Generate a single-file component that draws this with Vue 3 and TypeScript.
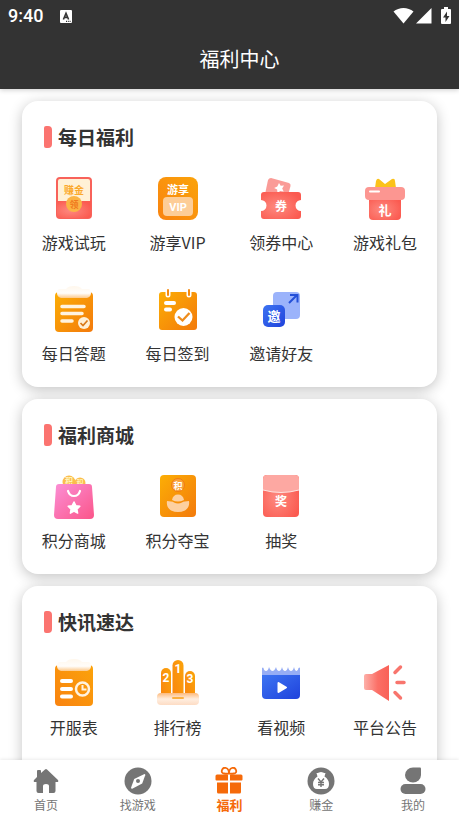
<script setup lang="ts">
interface Entry {
  id: string
  label: string
}
interface Section {
  title: string
  items: Entry[]
}

const sections: Section[] = [
  {
    title: '每日福利',
    items: [
      { id: 'trial', label: '游戏试玩' },
      { id: 'vip', label: '游享VIP' },
      { id: 'coupon', label: '领券中心' },
      { id: 'gift', label: '游戏礼包' },
      { id: 'quiz', label: '每日答题' },
      { id: 'checkin', label: '每日签到' },
      { id: 'invite', label: '邀请好友' },
    ],
  },
  {
    title: '福利商城',
    items: [
      { id: 'mall', label: '积分商城' },
      { id: 'treasure', label: '积分夺宝' },
      { id: 'lottery', label: '抽奖' },
    ],
  },
  {
    title: '快讯速达',
    items: [
      { id: 'servers', label: '开服表' },
      { id: 'ranking', label: '排行榜' },
      { id: 'video', label: '看视频' },
      { id: 'notice', label: '平台公告' },
    ],
  },
]

const tabs: Entry[] = [
  { id: 'home', label: '首页' },
  { id: 'discover', label: '找游戏' },
  { id: 'welfare', label: '福利' },
  { id: 'earn', label: '赚金' },
  { id: 'mine', label: '我的' },
]
const activeTab = 'welfare'
</script>

<template>
  <div class="app">
    <svg class="defs" aria-hidden="true">
      <defs>
        <linearGradient id="gOrange" x1="1" y1="0" x2="0" y2="1">
          <stop offset="0" stop-color="#fba30a" />
          <stop offset="1" stop-color="#f98310" />
        </linearGradient>
        <linearGradient id="gAmber" x1="0" y1="0" x2="1" y2="1">
          <stop offset="0" stop-color="#fcae05" />
          <stop offset="1" stop-color="#f37a0c" />
        </linearGradient>
        <radialGradient id="gRed" cx="0.4" cy="0.55" r="0.65">
          <stop offset="0" stop-color="#fd8a80" />
          <stop offset="1" stop-color="#fb5a50" />
        </radialGradient>
        <linearGradient id="gPink" x1="0" y1="0" x2="1" y2="1">
          <stop offset="0" stop-color="#fb8fd6" />
          <stop offset="1" stop-color="#fb5589" />
        </linearGradient>
        <linearGradient id="gBlue" x1="0" y1="0" x2="1" y2="1">
          <stop offset="0" stop-color="#3d74f2" />
          <stop offset="1" stop-color="#1f42dc" />
        </linearGradient>
        <linearGradient id="gHorn" x1="0" y1="0" x2="1" y2="0">
          <stop offset="0" stop-color="#fdb0a9" />
          <stop offset="0.55" stop-color="#fb6f66" />
          <stop offset="1" stop-color="#f96157" />
        </linearGradient>
        <linearGradient id="gClip" x1="0" y1="0" x2="0" y2="1">
          <stop offset="0" stop-color="#fff7ec" />
          <stop offset="0.6" stop-color="#fffdfa" />
          <stop offset="1" stop-color="#fdc98a" />
        </linearGradient>
        <linearGradient id="gBase" x1="0" y1="0" x2="0" y2="1">
          <stop offset="0" stop-color="#fdba7c" />
          <stop offset="0.5" stop-color="#ffeee0" />
          <stop offset="1" stop-color="#fddcc4" />
        </linearGradient>
      </defs>
    </svg>

    <header class="top">
      <div class="status">
        <span class="time">9:40</span>
        <svg class="badge" viewBox="0 0 12 13" aria-hidden="true">
          <path fill="#fff" d="M1 0h10a1 1 0 0 1 1 1v11a1 1 0 0 1-1 1H1a1 1 0 0 1-1-1V1a1 1 0 0 1 1-1z" />
          <path fill="none" stroke="#333" stroke-width="1.6" d="M3.400 9.500L6 3.300L8.600 9.500M4.500 7.400h3" />
          <path stroke="#333" stroke-width="1.200" stroke-dasharray="1.200 1" d="M6 11.300h5" />
        </svg>
        <svg class="signals" viewBox="0 0 58 18" aria-hidden="true">
          <path fill="#fff" d="M0.500 4.500C6 -0.300 15 -0.300 20.500 4.500L10.500 16.500z" />
          <path fill="#fff" d="M38.500 1v15.500H23z" />
          <path fill="#fff" d="M51 0h4v2h2q1 0 1 1v13q0 1-1 1h-8q-1 0-1-1V3q0-1 1-1h2z" />
          <path fill="#333" d="M54 4.500l-4 6h2.500v4.500l4-6H54z" />
        </svg>
      </div>
      <h1>福利中心</h1>
    </header>

    <main class="content">
      <section v-for="section in sections" :key="section.title" class="card">
        <h2>{{ section.title }}</h2>
        <div class="grid">
          <a v-for="item in section.items" :key="item.id" class="entry" :href="'#' + item.id">
            <svg class="icon" viewBox="0 0 44 44" aria-hidden="true">
              <g v-if="item.id === 'trial'">
                <rect x="4" y="0" width="36" height="42" rx="4" fill="#f8625a" />
                <rect x="6" y="2" width="32" height="30" rx="2" fill="#fff1d6" />
                <path fill="url(#gRed)" d="M5 24h9c2 0 2 7 8 7s6-7 8-7h9v14q0 3-3 3H8q-3 0-3-3z" />
                <circle cx="22" cy="27" r="8" fill="#fbb445" />
                <text x="22" y="17" font-size="10" fill="#fba92c">赚金</text>
                <text x="22" y="31" font-size="9" fill="#f07a20">领</text>
              </g>
              <g v-else-if="item.id === 'vip'">
                <rect x="2" y="0" width="40" height="43" rx="8" fill="url(#gOrange)" />
                <rect x="7" y="20" width="30" height="19" rx="4" fill="#fdcd97" />
                <text x="22" y="17" font-size="11" fill="#fff">游享</text>
                <text x="22" y="34" class="latin" font-size="11" fill="#fff">VIP</text>
              </g>
              <g v-else-if="item.id === 'coupon'">
                <path fill="#fa9b97" d="M12 1l18 5q2 1 1.500 3l-3.500 13H5L9 3q1-2 3-2z" />
                <path fill="#fff" d="M20 6l1.700 2.800 3.300-.2-1.800 2.900 1.500 3-3.500-.6-2.700 2.200-.4-3.600-3-1.600 3.200-1.500z" />
                <path fill="url(#gRed)" d="M5 15h34q3 0 3 3v5a5.500 5.500 0 0 0 0 11v5q0 3-3 3H5q-3 0-3-3v-5a5.500 5.500 0 0 0 0-11v-5q0-3 3-3z" />
                <text x="22" y="34" font-size="12" fill="#fff">券</text>
              </g>
              <g v-else-if="item.id === 'gift'">
                <path fill="#fbc21a" d="M12 11l1-7q1-3 3-2l6 5 7-5q3-1 3 2l1 7z" />
                <path fill="url(#gRed)" d="M6 20h32v19q0 4-4 4H10q-4 0-4-4z" />
                <rect x="2" y="10" width="40" height="13" rx="4" fill="#fc9691" />
                <path stroke="#fff" stroke-width="2" stroke-linecap="round" d="M7 14.500h9" />
                <text x="22" y="38" font-size="13" fill="#fff">礼</text>
              </g>
              <g v-else-if="item.id === 'quiz'">
                <rect x="3" y="4" width="38" height="40" rx="4" fill="url(#gAmber)" />
                <path fill="url(#gClip)" d="M8 1h6q2-3 8-3t8 3h6q3 0 3 4t-4 5H9q-4-1-4-5t3-4z" />
                <path stroke="#fff3df" stroke-width="3.500" stroke-linecap="round" d="M10 18.500h22M10 25.500h20M10 33h10" />
                <circle cx="32" cy="35" r="6" fill="#fff0d8" />
                <path fill="none" stroke="#d9791a" stroke-width="1.700" d="M28.500 35l2.500 2.500 4.500-5" />
              </g>
              <g v-else-if="item.id === 'checkin'">
                <rect x="3" y="4" width="38" height="38" rx="3" fill="url(#gAmber)" />
                <path stroke="#fff" stroke-width="5" stroke-linecap="round" d="M12 3v4M33 3v4" />
                <path stroke="#f58a10" stroke-width="2" stroke-linecap="round" d="M12 2v5M33 2v5" />
                <path stroke="#fff" stroke-width="4" stroke-linecap="round" d="M10 15h8M10 21.500h4" />
                <circle cx="27.500" cy="29" r="9" fill="#fff" />
                <path fill="none" stroke="#ee8c1c" stroke-width="2.300" d="M22 28.500l4.500 4 7-7.500" />
              </g>
              <g v-else-if="item.id === 'invite'">
                <rect x="14" y="4" width="27" height="27" rx="4" fill="#9bb3fb" />
                <path fill="none" stroke="#2450d8" stroke-width="2" d="M30 15l8-8M31 7h7.500v7.500" />
                <rect x="4" y="17" width="22" height="22" rx="5" fill="url(#gBlue)" />
                <text x="15" y="33" font-size="13" fill="#fff">邀</text>
              </g>
              <g v-else-if="item.id === 'mall'">
                <circle cx="17" cy="7" r="6.500" fill="#fbbd4c" />
                <circle cx="28" cy="8" r="5.500" fill="#fbbd4c" />
                <text x="17" y="9" font-size="8" fill="#fff2b8">积</text>
                <text x="28" y="10" font-size="7" fill="#fff2b8">积</text>
                <path fill="url(#gPink)" d="M7 9h30q3 0 3 3l2 28q0 4-4 4H6q-4 0-4-4l2-28q0-3 3-3z" />
                <path fill="none" stroke="#fff" stroke-width="2.200" stroke-linecap="round" d="M16 16q1.500 5 6 5t6-5" />
                <path fill="#fff" stroke="#fff" stroke-width="1.500" stroke-linejoin="round" d="M22 27l1.800 3.700 4 .6-2.900 2.800.7 4L22 36.200l-3.600 1.900.7-4-2.900-2.800 4-.6z" />
              </g>
              <g v-else-if="item.id === 'treasure'">
                <rect x="4" y="0" width="36" height="42" rx="4" fill="url(#gAmber)" />
                <circle cx="22" cy="10" r="6.500" fill="#f8a23c" stroke="#f27d12" />
                <text x="22" y="13.500" font-size="9" fill="#fff">积</text>
                <path fill="#fdd0a0" d="M16 25q1-5.500 6-5.500t6 5.500q-6 3-12 0z" />
                <path fill="#fdd0a0" d="M11 26q5 0 7 1.500 4 2 8 0 2-1.500 7-1.500 1 6-4 9.500-7 3-14 0-5-3.500-4-9.500z" />
              </g>
              <g v-else-if="item.id === 'lottery'">
                <rect x="4" y="0" width="36" height="42" rx="4" fill="url(#gRed)" />
                <path fill="#fda8a2" d="M8 0h28q4 0 4 4v11q-18 5-36 0V4q0-4 4-4z" />
                <path fill="none" stroke="#ffe3df" stroke-width="1" d="M4 15q18 5 36 0" />
                <text x="22" y="31" font-size="12" fill="#fff">奖</text>
              </g>
              <g v-else-if="item.id === 'servers'">
                <rect x="3" y="3" width="38" height="41" rx="4" fill="url(#gOrange)" />
                <path fill="url(#gClip)" d="M8 0h6q2-3 8-3t8 3h6q3 0 3 4t-4 5H9q-4-1-4-5t3-4z" />
                <path stroke="#fff" stroke-width="4" stroke-linecap="round" d="M10 19h9M10 27h9M10 34.500h9" />
                <circle cx="30.500" cy="27" r="6.500" fill="none" stroke="#fff3e0" stroke-width="2.500" />
                <path fill="none" stroke="#fff3e0" stroke-width="2" d="M30.500 23v4.500h4" />
              </g>
              <g v-else-if="item.id === 'ranking'">
                <path fill="url(#gOrange)" d="M5 40V11a5 5 0 0 1 10 0v29z" />
                <path fill="url(#gOrange)" d="M16.500 40V3.500a5.500 5.500 0 0 1 11 0V40z" />
                <path fill="url(#gOrange)" d="M29 40V14a5 5 0 0 1 10 0v26z" />
                <rect x="1" y="31" width="42" height="12" rx="4" fill="url(#gBase)" />
                <path stroke="#fbb040" stroke-width="2" stroke-linecap="round" d="M17 36h10" />
                <text x="10" y="20" class="latin" font-size="12" fill="#fff">2</text>
                <text x="22" y="11" class="latin" font-size="12" fill="#fff">1</text>
                <text x="34" y="21" class="latin" font-size="12" fill="#fff">3</text>
              </g>
              <g v-else-if="item.id === 'video'">
                <path fill="#96adf5" d="M3 6q1-1 1.500 0 .5 3 2.500 3t3-4q1.500 4 3.500 4T17 5q1 4 3 4t3-4q1 4 3 4t3-4q1 4 3 4t3-4q1 4 2.500 4T39.500 6q1-1 1.500 0v8H3z" />
                <path fill="url(#gBlue)" d="M3 13h38v20q0 4-4 4H7q-4 0-4-4z" />
                <path fill="#fff" stroke="#fff" stroke-width="2" stroke-linejoin="round" d="M19.500 21v9l7.500-4.500z" />
              </g>
              <g v-else>
                <path fill="url(#gHorn)" d="M1 14q0-2 2-2h6L26 3v36L9 28H3q-2 0-2-2z" />
                <path stroke="#f8756d" stroke-width="3.500" stroke-linecap="round" d="M32 10.500l5.500-5.500M34 20.500h7M32 30.500l5.500 5.500" />
              </g>
            </svg>
            <span>{{ item.label }}</span>
          </a>
        </div>
      </section>
    </main>

    <nav class="tabs">
      <a
        v-for="tab in tabs"
        :key="tab.id"
        class="tab"
        :class="{ active: tab.id === activeTab }"
        :aria-current="tab.id === activeTab ? 'page' : undefined"
        :href="'#' + tab.id"
      >
        <svg viewBox="0 0 28 28" fill="currentColor" aria-hidden="true">
          <path
            v-if="tab.id === 'home'"
            d="M13 2.500q1-.8 2 0l11 10.500q1 2-1 2h-1.500v9q0 2-2 2H17v-7q0-2-3-2t-3 2v7H6.500q-2 0-2-2v-9H3q-2 0-1-2l3-3V4q0-1 1-1h2q1 0 1 1v2z"
          />
          <g v-else-if="tab.id === 'discover'">
            <circle cx="14" cy="14" r="13.500" />
            <path fill="#fff" d="M20.500 7q1 0 .7 1.200l-3 8.300-9.500 5q-2 .8-1.500-1.200l3-8.300z" />
            <circle cx="14" cy="14" r="2" />
          </g>
          <g v-else-if="tab.id === 'welfare'">
            <path fill="none" stroke="currentColor" stroke-width="1.800" d="M14 6.500Q12 7 9 6.500T7 3q1-3 4-2 3 1 3 5.500zM14 6.500q2 .5 5 0t2-3.500q-1-3-4-2-3 1-3 5.500z" />
            <path d="M2 7.500h11v6H1.500q-1 0-1-1V9q0-1.500 1.500-1.500zM15 7.500h11q1.500 0 1.500 1.500v3.500q0 1-1 1H15z" />
            <path d="M2 15.500h11v11H3.500q-1.500 0-1.500-1.500zM15 15.500h11V25q0 1.500-1.500 1.500H15z" />
          </g>
          <g v-else-if="tab.id === 'earn'">
            <circle cx="14" cy="14" r="13.500" />
            <path fill="#fff" d="M9.500 6q1.500 0 2.500-.5 2-1 4 0 1 .5 2.500.5l-1 3.500q4.500 3 4.500 7.500 0 5-4 5H10q-4 0-4-5 0-4.500 4.500-7.500z" />
            <path fill="none" stroke="currentColor" stroke-width="1.400" d="M11 11.500l3 3.500 3-3.500M11 15.500h6M11 17.700h6M14 15v5" />
          </g>
          <g v-else>
            <path d="M14 .5h7q1 0 1 1V8a8 7.500 0 1 1-8-7.500z" />
            <rect x="1.500" y="17" width="25" height="10" rx="5" />
          </g>
        </svg>
        <span>{{ tab.label }}</span>
      </a>
    </nav>
  </div>
</template>

<style>
body {
  margin: 0;
  background: #fff;
}
</style>

<style scoped>
.app {
  display: flex;
  flex-direction: column;
  height: 100vh;
  overflow: hidden;
  color: #333;
  font-family: "Noto Sans CJK SC", sans-serif;
}
.defs {
  position: absolute;
  width: 0;
  height: 0;
}
a {
  color: inherit;
  text-decoration: none;
}
.top {
  position: relative;
  z-index: 1;
  background: #333;
  color: #fff;
  box-shadow: 0 1px 5px rgba(0, 0, 0, 0.2);
}
.status {
  display: flex;
  align-items: center;
  height: 32px;
  padding: 0 8px;
}
.time {
  font: 500 18px/32px Roboto, sans-serif;
}
.badge {
  width: 12px;
  height: 13px;
  margin-left: 17px;
}
.signals {
  width: 58px;
  height: 18px;
  margin-left: auto;
}
h1 {
  margin: 0;
  padding: 13px 0 16px 20px;
  font-size: 20px;
  font-weight: 400;
  line-height: 28px;
  text-align: center;
}
.content {
  flex: 1;
  min-height: 0;
  padding: 12px 22px;
  overflow-y: auto;
  scrollbar-width: none;
}
.card {
  padding: 24px 0 22px;
  border-radius: 16px;
  background: #fff;
  box-shadow: 0 3px 14px rgba(0, 0, 0, 0.24);
}
.card + .card {
  margin-top: 12px;
}
.card:last-child {
  padding-bottom: 40px;
}
h2 {
  display: flex;
  align-items: center;
  gap: 6px;
  margin: 0 22px 28px;
  font-size: 19px;
  font-weight: 700;
  line-height: 24px;
}
h2::before {
  width: 8px;
  height: 22px;
  border-radius: 2px 4px 4px 2px;
  background: #fb7470;
  content: "";
}
.grid {
  display: grid;
  grid-template-columns: repeat(4, 1fr);
  row-gap: 34px;
}
.entry {
  display: flex;
  flex-direction: column;
  align-items: center;
  gap: 9px;
  font-size: 16px;
  line-height: 24px;
  white-space: nowrap;
}
.icon {
  width: 44px;
  height: 44px;
  overflow: visible;
}
.icon text {
  font-weight: 700;
  text-anchor: middle;
}
.icon .latin {
  font-family: Roboto, sans-serif;
}
.tabs {
  position: relative;
  z-index: 1;
  display: grid;
  grid-template-columns: repeat(5, 1fr);
  padding: 7px 0 2px;
  background: #fff;
  box-shadow: 0 -1px 3px rgba(0, 0, 0, 0.08);
  color: #757575;
}
.tab {
  display: flex;
  flex-direction: column;
  align-items: center;
  gap: 1px;
  font-size: 12px;
  line-height: 18px;
}
.tab svg {
  width: 28px;
  height: 28px;
}
.active {
  color: #f56a0a;
  font-size: 13px;
  font-weight: 700;
}
</style>
